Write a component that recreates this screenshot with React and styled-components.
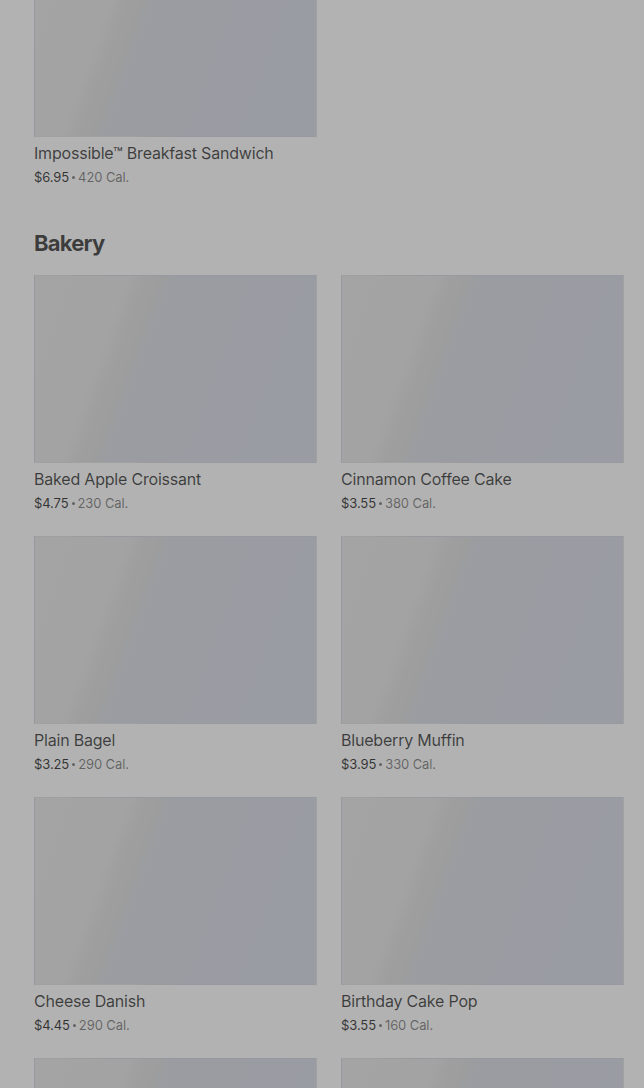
import styled, { createGlobalStyle } from "styled-components";

const GlobalStyle = createGlobalStyle`
  html, body {
    margin: 0;
    padding: 0;
    background: #ffffff;
    overflow: hidden;
  }
  body {
    font-family: Inter, "Noto Sans", "Liberation Sans", sans-serif;
    -webkit-font-smoothing: antialiased;
  }
`;

const Page = styled.main`
  padding: 0 20px 0 34px;
  margin-top: -51px;
`;

const Section = styled.section`
  margin-bottom: 42px;
`;

const SectionTitle = styled.h2`
  margin: 0 0 18px;
  font-size: 22px;
  line-height: 28px;
  font-weight: 700;
  letter-spacing: -0.8px;
  color: rgba(0, 0, 0, 0.66);
`;

const Grid = styled.div`
  display: grid;
  grid-template-columns: 283px 283px;
  column-gap: 24px;
  row-gap: 23px;
`;

const Card = styled.a`
  display: flex;
  flex-direction: column;
  text-decoration: none;
`;

const Thumb = styled.div`
  height: 188px;
  box-sizing: border-box;
  border: 1px solid rgba(0, 0, 0, 0.015);
  background: linear-gradient(
    110deg,
    #ebebeb 0%,
    #eaeaea 27%,
    #e3e4e3 31%,
    #e1e1e1 36%,
    #dde0e8 40%,
    #dce0ea 100%
  );
`;

const Name = styled.div`
  margin-top: 4px;
  font-size: 16px;
  line-height: 24px;
  letter-spacing: -0.2px;
  color: rgba(0, 0, 0, 0.66);
`;

const Meta = styled.div`
  display: flex;
  align-items: center;
  margin-top: 2px;
  font-size: 13px;
  line-height: 20px;
  letter-spacing: -0.1px;
  color: rgba(0, 0, 0, 0.45);
`;

const Price = styled.span`
  color: rgba(0, 0, 0, 0.72);
`;

const Dot = styled.span`
  display: inline-block;
  width: 3px;
  height: 3px;
  margin: 1px 3px 0 3px;
  border-radius: 50%;
  background: currentColor;
`;

const Backdrop = styled.div`
  position: fixed;
  inset: 0;
  background: rgba(0, 0, 0, 0.3);
`;

const prevItems = [{ name: "Impossible™ Breakfast Sandwich", price: "$6.95", cal: "420" }];

const bakery = [
  { name: "Baked Apple Croissant", price: "$4.75", cal: "230" },
  { name: "Cinnamon Coffee Cake", price: "$3.55", cal: "380" },
  { name: "Plain Bagel", price: "$3.25", cal: "290" },
  { name: "Blueberry Muffin", price: "$3.95", cal: "330" },
  { name: "Cheese Danish", price: "$4.45", cal: "290" },
  { name: "Birthday Cake Pop", price: "$3.55", cal: "160" },
  { name: "Chocolate Croissant", price: "$4.25", cal: "300" },
  { name: "Butter Croissant", price: "$3.75", cal: "260" },
];

const Product = ({ item }) => (
  <Card href="#">
    <Thumb />
    <Name>{item.name}</Name>
    <Meta>
      <Price>{item.price}</Price>
      <Dot />
      <span>{item.cal} Cal.</span>
    </Meta>
  </Card>
);

export default function App() {
  return (
    <>
      <GlobalStyle />
      <Page>
        <Section>
          <Grid>
            {prevItems.map((item) => (
              <Product key={item.name} item={item} />
            ))}
          </Grid>
        </Section>
        <Section>
          <SectionTitle>Bakery</SectionTitle>
          <Grid>
            {bakery.map((item) => (
              <Product key={item.name} item={item} />
            ))}
          </Grid>
        </Section>
      </Page>
      <Backdrop />
    </>
  );
}
